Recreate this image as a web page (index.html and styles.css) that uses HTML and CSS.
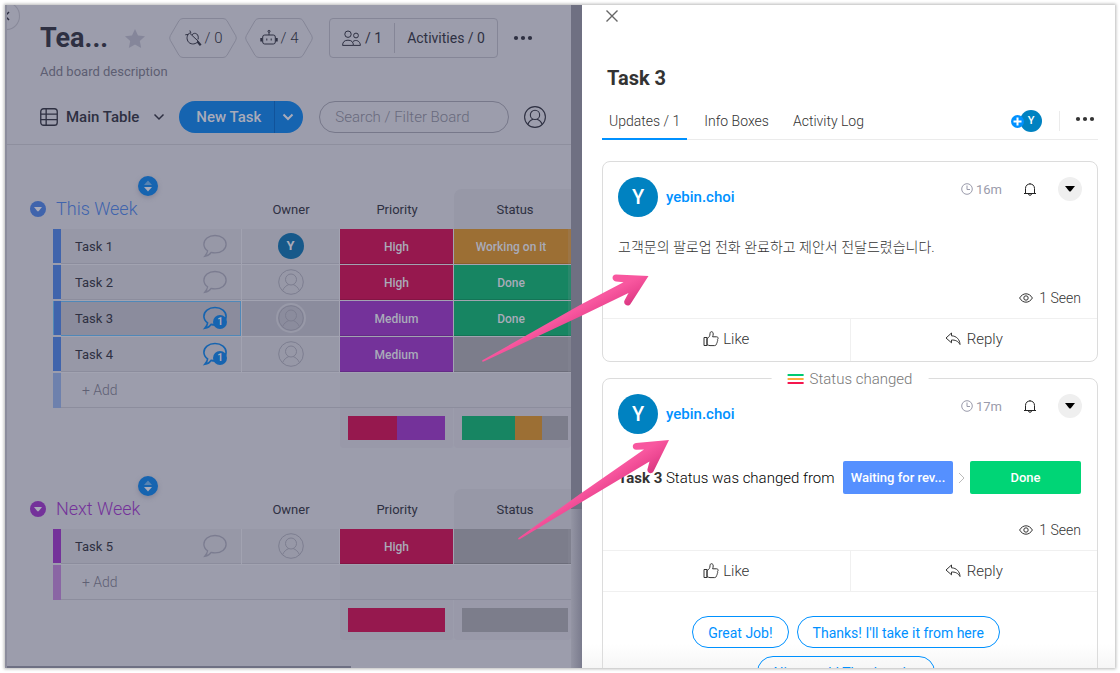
FILE: index.html
```html
<!DOCTYPE html>
<html lang="ko">
<head>
	<meta charset="utf-8">
	<meta name="viewport" content="width=device-width, initial-scale=1.0">
	<link rel="stylesheet" href="styles.css">
<title>Team board</title>
</head>
<body>
<svg class="defs" aria-hidden="true">
	<symbol id="i-bubble" viewBox="0 0 26 26"><path d="M13 2.500C6.500 2.500 1.900 6.300 1.900 11.200c0 2.700 1.400 5 3.700 6.600-.2 2.100-1.500 4-2.800 5.500 2.800-.4 4.900-1.400 6.300-3.900 1.200.3 2.600.5 3.900.5 6.500 0 11.100-3.800 11.100-8.700S19.500 2.500 13 2.500z"/></symbol>
	<symbol id="i-person" viewBox="0 0 26 26"><circle cx="13" cy="13" r="12.300"/><circle cx="13" cy="10.500" r="5.500"/><path d="M4.500 21.800c1.200-3.300 4-5.500 6.300-6.200M21.500 21.800c-1.200-3.300-4-5.500-6.300-6.200"/></symbol>
	<symbol id="i-chevron" viewBox="0 0 12 8"><path d="M1.500 1.500L6 6l4.500-4.500"/></symbol>
	<symbol id="i-caret" viewBox="0 0 10 6"><path d="M0 0h10L6 5q-1 1-2 0z"/></symbol>
	<symbol id="i-dots" viewBox="0 0 20 6"><circle cx="3" cy="3" r="2.100"/><circle cx="10" cy="3" r="2.100"/><circle cx="17" cy="3" r="2.100"/></symbol>
	<symbol id="i-sort" viewBox="0 0 10 12"><path d="M1 5l4-4.500L9 5z" opacity=".45"/><path d="M1 7l4 4.500L9 7z"/></symbol>
	<symbol id="i-clock" viewBox="0 0 12 12"><circle cx="6" cy="6" r="5.300"/><path d="M6 2.500V6.500h3"/></symbol>
	<symbol id="i-bell" viewBox="0 0 14 15"><path d="M1 11.500h12M2.500 11.500V6.500C2.500 3.500 4.500 2 7 2s4.500 1.500 4.500 4.500v5M5.500 11.800a1.500 1.500 0 0 0 3 0M7 2V1"/></symbol>
	<symbol id="i-eye" viewBox="0 0 14 10"><path d="M.6 5C2.200 2.300 4.500.8 7 .8S11.800 2.300 13.400 5C11.800 7.700 9.500 9.200 7 9.200S2.200 7.700.6 5z"/><circle cx="7" cy="5" r="2.200"/></symbol>
	<symbol id="i-like" viewBox="0 0 16 16"><path d="M1 6.500h3v8H1zM4 7.500c2.200-1 3-2.600 3-4.800 0-1.400.7-2 1.500-2 1.200 0 1.700 1 1.700 2.300 0 1-.3 2-.6 2.800h4c1 0 1.600.7 1.500 1.600 0 .6-.3 1-.7 1.300.5.800.3 1.700-.4 2.200.3.900 0 1.600-.7 2 0 1.100-.7 1.700-1.800 1.700H7c-1.200 0-2-.6-3-.9z"/></symbol>
	<symbol id="i-reply" viewBox="0 0 16 14"><path d="M6.500 1L1 6l5.500 4.800V8c3.500-.1 6.500.9 8.500 4.500C14.800 7.500 11.500 4 6.500 3.800z"/></symbol>
</svg>

<div class="app">
	<main class="board">
		<button class="back" type="button" aria-label="Back"><svg viewBox="0 0 6 10"><path d="M5 1L1 5l4 4"/></svg></button>

		<header class="board-head">
			<div class="title-row">
				<h1>Tea...</h1>
				<svg class="star" viewBox="0 0 20 19"><path d="M10 0l3 6.500 7 .8-5.200 4.700 1.400 7L10 15.500 3.800 19l1.400-7L0 7.300l7-.8z"/></svg>
				<button class="hex" type="button">
					<svg class="hex-shape" viewBox="0 0 68 40"><path d="M14 .5h40q2.500 0 4 2.200l8.700 15q1.300 2.300 0 4.600l-8.700 15q-1.500 2.200-4 2.200H14q-2.500 0-4-2.200l-8.700-15q-1.300-2.300 0-4.600l8.700-15q1.500-2.200 4-2.200z"/></svg>
					<svg class="icon" viewBox="0 0 18 18"><path d="M5.500 4l8.500 8c-1.500 3.300-6.500 4-9.300 1.300C2.300 10.500 2.500 6.500 5.500 4zM4 5.500L1.300 5.800M7 4.200L5.800 1.500M8 5.800C11 2.300 15.500 5.500 14 10.500"/><path d="M13.500 12.500l3.200 3.700" stroke-width="2.200"/></svg>
					<span>/ 0</span>
				</button>
				<button class="hex" type="button">
					<svg class="hex-shape" viewBox="0 0 68 40"><path d="M14 .5h40q2.500 0 4 2.200l8.700 15q1.300 2.300 0 4.600l-8.700 15q-1.500 2.200-4 2.200H14q-2.500 0-4-2.200l-8.700-15q-1.300-2.300 0-4.600l8.700-15q1.500-2.200 4-2.200z"/></svg>
					<svg class="icon" viewBox="0 0 18 18"><rect x="2.700" y="6" width="12.600" height="9" rx="2"/><path d="M9 6V3M6.800 9.500v2M11.200 9.500v2"/><path d="M1.300 9v3.500M16.700 9v3.500" stroke-width="2"/><circle cx="9" cy="2.300" r="1"/></svg>
					<span>/ 4</span>
				</button>
				<div class="meta">
					<button type="button">
						<svg class="people" viewBox="0 0 19 16"><circle cx="6" cy="4.200" r="3.200"/><circle cx="14" cy="5.500" r="2.400"/><path d="M.6 15.400c0-3.500 1.900-5.200 5.400-5.200s5.400 1.700 5.400 5.200zM11 11.500c3-2.300 7.200-.6 7.400 3.900h-7"/></svg>
						<span>/ 1</span>
					</button>
					<button type="button">Activities / 0</button>
				</div>
				<button class="dots" type="button" aria-label="Board menu"><svg><use href="#i-dots"/></svg></button>
			</div>
			<p class="description">Add board description</p>
			<div class="view-row">
				<button class="view" type="button">
					<svg class="grid-icon" viewBox="0 0 19 19"><rect x=".8" y=".8" width="17.400" height="17.400" rx="3"/><path d="M1 6.500h17M1 12.300h17M6.500 1v17"/></svg>
					Main Table
					<svg class="chev"><use href="#i-chevron"/></svg>
				</button>
				<div class="new-task">
					<button type="button">New Task</button>
					<button type="button" aria-label="More"><svg class="chev"><use href="#i-chevron"/></svg></button>
				</div>
				<input class="search" type="text" placeholder="Search / Filter Board" aria-label="Search / Filter Board">
				<button class="who" type="button" aria-label="Filter by person"><svg><use href="#i-person"/></svg></button>
			</div>
		</header>

		<div class="groups">
			<table class="group week">
				<colgroup><col class="c-gutter"><col class="c-bar"><col class="c-name"><col class="c-owner"><col class="c-label"><col class="c-label"><col></colgroup>
				<thead>
					<tr>
						<th><button class="collapse" type="button" aria-label="Collapse"><svg><use href="#i-caret"/></svg></button></th>
						<th class="group-name" colspan="2">This Week<button class="sort" type="button" aria-label="Sort"><svg><use href="#i-sort"/></svg></button></th>
						<th>Owner</th>
						<th>Priority</th>
						<th class="sorted" colspan="2">Status</th>
					</tr>
				</thead>
				<tbody>
					<tr>
						<td></td><td class="bar"></td>
						<td class="name"><div>Task 1<svg class="bubble"><use href="#i-bubble"/></svg></div></td>
						<td class="owner"><span class="avatar small">Y</span></td>
						<td class="label high">High</td>
						<td class="label working">Working on it</td>
						<td class="label working next"></td>
					</tr>
					<tr>
						<td></td><td class="bar"></td>
						<td class="name"><div>Task 2<svg class="bubble"><use href="#i-bubble"/></svg></div></td>
						<td class="owner"><svg class="nobody"><use href="#i-person"/></svg></td>
						<td class="label high">High</td>
						<td class="label done">Done</td>
						<td class="label done next"></td>
					</tr>
					<tr class="selected">
						<td></td><td class="bar"></td>
						<td class="name"><div>Task 3<span class="updates"><svg class="bubble"><use href="#i-bubble"/></svg><b>1</b></span></div></td>
						<td class="owner"><svg class="nobody"><use href="#i-person"/></svg></td>
						<td class="label medium">Medium</td>
						<td class="label done">Done</td>
						<td class="label done next"></td>
					</tr>
					<tr>
						<td></td><td class="bar"></td>
						<td class="name"><div>Task 4<span class="updates"><svg class="bubble"><use href="#i-bubble"/></svg><b>1</b></span></div></td>
						<td class="owner"><svg class="nobody"><use href="#i-person"/></svg></td>
						<td class="label medium">Medium</td>
						<td class="label empty"></td>
						<td class="label empty next"></td>
					</tr>
					<tr class="add">
						<td></td><td class="bar"></td>
						<td class="add-name" colspan="2">+ Add</td>
						<td class="pad"></td>
						<td class="pad" colspan="2"></td>
					</tr>
				</tbody>
				<tfoot>
					<tr>
						<td colspan="4"></td>
						<td class="sum"><div><i class="high" style="flex-grow:2"></i><i class="medium" style="flex-grow:2"></i></div></td>
						<td class="sum last" colspan="2"><div><i class="done" style="flex-grow:2"></i><i class="working" style="flex-grow:1"></i><i class="empty" style="flex-grow:1"></i></div></td>
					</tr>
				</tfoot>
			</table>

			<table class="group later">
				<colgroup><col class="c-gutter"><col class="c-bar"><col class="c-name"><col class="c-owner"><col class="c-label"><col class="c-label"><col></colgroup>
				<thead>
					<tr>
						<th><button class="collapse" type="button" aria-label="Collapse"><svg><use href="#i-caret"/></svg></button></th>
						<th class="group-name" colspan="2">Next Week<button class="sort" type="button" aria-label="Sort"><svg><use href="#i-sort"/></svg></button></th>
						<th>Owner</th>
						<th>Priority</th>
						<th class="sorted" colspan="2">Status</th>
					</tr>
				</thead>
				<tbody>
					<tr>
						<td></td><td class="bar"></td>
						<td class="name"><div>Task 5<svg class="bubble"><use href="#i-bubble"/></svg></div></td>
						<td class="owner"><svg class="nobody"><use href="#i-person"/></svg></td>
						<td class="label high">High</td>
						<td class="label empty"></td>
						<td class="label empty next"></td>
					</tr>
					<tr class="add">
						<td></td><td class="bar"></td>
						<td class="add-name" colspan="2">+ Add</td>
						<td class="pad"></td>
						<td class="pad" colspan="2"></td>
					</tr>
				</tbody>
				<tfoot>
					<tr>
						<td colspan="4"></td>
						<td class="sum"><div><i class="high" style="flex-grow:1"></i></div></td>
						<td class="sum last" colspan="2"><div><i class="empty" style="flex-grow:1"></i></div></td>
					</tr>
				</tfoot>
			</table>
		</div>
		<div class="hscroll"></div>
	</main>

	<div class="vscroll"><div></div></div>

	<aside class="panel">
		<button class="close" type="button" aria-label="Close"><svg viewBox="0 0 12 12"><path d="M.5.5l11 11M11.500.5l-11 11"/></svg></button>
		<h2>Task 3</h2>
		<nav class="tabs">
			<a class="tab active" href="#updates">Updates / 1</a>
			<a class="tab" href="#info">Info Boxes</a>
			<a class="tab" href="#log">Activity Log</a>
			<div class="tab-tools">
				<button class="subscribe" type="button" aria-label="Subscribers"><svg viewBox="0 0 13 13"><circle cx="6.500" cy="6.500" r="6.500"/><path d="M6.500 2.500v8M2.500 6.500h8"/></svg><span class="avatar tiny">Y</span></button>
				<button class="dots" type="button" aria-label="Item menu"><svg><use href="#i-dots"/></svg></button>
			</div>
		</nav>

		<article class="post">
			<header>
				<span class="avatar">Y</span>
				<a class="author" href="#yebin">yebin.choi</a>
				<div class="post-tools">
					<span class="time"><svg><use href="#i-clock"/></svg>16m</span>
					<button class="bell" type="button" aria-label="Remind"><svg><use href="#i-bell"/></svg></button>
					<button class="more" type="button" aria-label="More"><svg><use href="#i-caret"/></svg></button>
				</div>
			</header>
			<p class="message">고객문의 팔로업 전화 완료하고 제안서 전달드렸습니다.</p>
			<div class="seen"><svg><use href="#i-eye"/></svg>1 Seen</div>
			<div class="actions">
				<button type="button"><svg><use href="#i-like"/></svg>Like</button>
				<button type="button"><svg><use href="#i-reply"/></svg>Reply</button>
			</div>
		</article>

		<article class="post change">
			<div class="legend"><i></i>Status changed</div>
			<header>
				<span class="avatar">Y</span>
				<a class="author" href="#yebin">yebin.choi</a>
				<div class="post-tools">
					<span class="time"><svg><use href="#i-clock"/></svg>17m</span>
					<button class="bell" type="button" aria-label="Remind"><svg><use href="#i-bell"/></svg></button>
					<button class="more" type="button" aria-label="More"><svg><use href="#i-caret"/></svg></button>
				</div>
			</header>
			<div class="diff">
				<p><strong>Task 3</strong> Status was changed from</p>
				<span class="chip from">Waiting for rev...</span>
				<svg class="to-arrow" viewBox="0 0 7 12"><path d="M1 1l5 5-5 5"/></svg>
				<span class="chip to">Done</span>
			</div>
			<div class="seen"><svg><use href="#i-eye"/></svg>1 Seen</div>
			<div class="actions">
				<button type="button"><svg><use href="#i-like"/></svg>Like</button>
				<button type="button"><svg><use href="#i-reply"/></svg>Reply</button>
			</div>
			<div class="replies">
				<button type="button">Great Job!</button>
				<button type="button">Thanks! I'll take it from here</button>
				<button type="button">Nice work! Thanks a lot</button>
			</div>
		</article>
	</aside>
</div>

<!-- callout arrows, drawn over both the board and the panel -->
<svg class="callouts" viewBox="0 0 200 280" aria-hidden="true">
	<defs>
		<linearGradient id="pink1" gradientUnits="userSpaceOnUse" x1="115" y1="30" x2="124" y2="47"><stop offset="0" stop-color="#f8579f"/><stop offset=".5" stop-color="#ee4993"/><stop offset="1" stop-color="#dd3a84"/></linearGradient>
		<linearGradient id="pink2" gradientUnits="userSpaceOnUse" x1="135" y1="200" x2="146" y2="217"><stop offset="0" stop-color="#f8579f"/><stop offset=".5" stop-color="#ee4993"/><stop offset="1" stop-color="#dd3a84"/></linearGradient>
	</defs>
	<path fill="url(#pink1)" d="M168.500 6L136 4.500c-4.500 0-4.700 6.500 0 7l7.500.7L100 35 2.500 90.200c-1 1 0 1.800 1.200 1.300L100 46.500 148.500 23l-4 7.500c-1.800 4 3.800 7 6 3.500z"/>
	<path fill="url(#pink2)" d="M189 170l-33 3c-4.500.5-4.200 7 .5 6.800l7.500-.3L100 224l-61.500 44c-1 1 0 1.800 1.200 1.300L100 233l69.500-41.500-2 7.500c-1 4.300 4.500 5.800 6.200 2z"/>
</svg>
</body>
</html>
```
FILE: styles.css
```css
* {
	box-sizing: border-box;
}

body {
	margin: 0;
	background: #fff;
	color: #2e3042;
	font-family: Roboto, "Noto Sans CJK KR", sans-serif;
	font-size: 14px;
	overflow: hidden;
}

button, input {
	font: inherit;
	color: inherit;
	background: none;
	border: none;
	padding: 0;
	margin: 0;
}

button {
	cursor: pointer;
}

svg {
	display: block;
	flex: none;
	fill: none;
	stroke: currentColor;
}

h1, h2, p {
	margin: 0;
}

.defs {
	position: absolute;
	width: 0;
	height: 0;
}

.app {
	display: grid;
	grid-template-columns: minmax(0, 1fr) 11px 533px;
	height: calc(100vh - 10px);
	margin: 5px;
	overflow: hidden;
	box-shadow: 0 0 3px 1px #b8b8b8;
}

/* board, dimmed behind the open panel */
.board {
	position: relative;
	overflow: hidden;
	background: #9c9dac;
	border-left: 2px solid #8b8c9c;
}

.back {
	position: absolute;
	left: -14px;
	top: -3px;
	width: 27px;
	height: 28px;
	padding-left: 10px;
	border: 1px solid #888999;
	border-radius: 50%;
}

.back svg {
	width: 6px;
	height: 10px;
	stroke-width: 1.5;
}

.board-head {
	padding: 13px 0 11px 33px;
	border-bottom: 1px solid #8e8f9e;
}

.title-row {
	display: flex;
	align-items: center;
	height: 40px;
}

h1 {
	width: 85px;
	font-size: 27px;
	font-weight: 700;
}

.star {
	width: 20px;
	height: 19px;
	margin-right: 24px;
	fill: #85869a;
	stroke: none;
}

.hex {
	position: relative;
	display: flex;
	align-items: center;
	justify-content: center;
	gap: 3px;
	width: 68px;
	height: 40px;
	margin-right: 8px;
	font-size: 15px;
	font-weight: 300;
}

.hex-shape {
	position: absolute;
	inset: 0;
	color: #858697;
}

.icon {
	width: 18px;
	height: 18px;
}

.meta {
	display: flex;
	align-items: center;
	height: 40px;
	margin: 0 15px 0 8px;
	border: 1px solid #858697;
	border-radius: 4px;
	font-weight: 400;
}

.meta button {
	display: flex;
	align-items: center;
	gap: 4px;
	height: 30px;
	padding: 0 12px;
}

.meta button + button {
	border-left: 1px solid #858697;
}

.people {
	width: 19px;
	height: 16px;
}

.dots svg {
	width: 20px;
	height: 6px;
	fill: currentColor;
	stroke: none;
}

.description {
	margin: 4px 0 19px;
	font-size: 13px;
	line-height: 20px;
	color: #5d5e72;
}

.view-row {
	display: flex;
	align-items: center;
	height: 32px;
}

.view {
	display: flex;
	align-items: center;
	gap: 8px;
	font-size: 15px;
	font-weight: 500;
}

.grid-icon {
	width: 18px;
	height: 18px;
	stroke-width: 1.4;
}

.chev {
	width: 12px;
	height: 8px;
	stroke-width: 1.5;
}

.view .chev {
	margin-left: 6px;
}

.new-task {
	display: flex;
	height: 32px;
	margin: 0 16px 0 14px;
	border-radius: 16px;
	background: #1664b0;
	color: #a9abb9;
	font-size: 15px;
	font-weight: 500;
	overflow: hidden;
}

.new-task button {
	padding: 0 13px 0 17px;
}

.new-task button + button {
	padding: 0 9px 0 7px;
	border-left: 1px solid #11539a;
}

.new-task .chev {
	stroke-width: 2;
}

.search {
	width: 190px;
	height: 32px;
	padding: 0 15px;
	border: 1px solid #77788a;
	border-radius: 16px;
	font-size: 15px;
	font-weight: 300;
}

.search::placeholder {
	color: #686a7d;
	opacity: 1;
}

.who {
	margin-left: 15px;
}

.who svg {
	width: 22px;
	height: 22px;
	stroke-width: 1.3;
}

.groups {
	padding: 44px 0 0 22px;
}

.group {
	width: 100%;
	margin-bottom: 41px;
	table-layout: fixed;
	border-collapse: separate;
	border-spacing: 0;
	font-size: 13px;
}

.week {
	--accent: #4064ac;
	--accent-soft: #6e81ad;
}

.later {
	--accent: #74329a;
	--accent-soft: #8a66a4;
}

.c-gutter {
	width: 24px;
}

.c-bar {
	width: 8px;
}

.c-name {
	width: 181px;
}

.c-owner {
	width: 98px;
}

.c-label {
	width: 114px;
}

.group th, .group td {
	padding: 0;
	text-align: center;
}

.group th {
	height: 40px;
	font-weight: 400;
}

.group .group-name {
	position: relative;
	padding: 0 0 2px 3px;
	text-align: left;
	font-size: 18px;
	font-weight: 300;
	color: var(--accent);
}

.group .sorted {
	padding-left: 5px;
	background: #9798a7;
	border-top-left-radius: 8px;
}

.collapse, .sort {
	display: flex;
	align-items: center;
	justify-content: center;
	border-radius: 50%;
	color: #a9abb9;
}

.collapse {
	width: 16px;
	height: 16px;
	margin-left: 1px;
	background: var(--accent);
}

.collapse svg {
	width: 8px;
	height: 5px;
	fill: currentColor;
	stroke: none;
}

.sort {
	position: absolute;
	top: -13px;
	right: 50%;
	width: 20px;
	height: 20px;
	margin-right: -10px;
	background: #1664b0;
	box-shadow: 0 2px 5px #85869a;
}

.sort svg {
	width: 10px;
	height: 12px;
	fill: currentColor;
	stroke: none;
}

.group tbody td {
	height: 36px;
	border-bottom: 1px solid #a2a3b1;
}

.group tbody td:first-child {
	border: none;
}

.group tbody .bar {
	background: var(--accent);
	border-bottom: 2px solid #9c9dac;
}

.name, .owner {
	background: #9798a7;
	box-shadow: inset 0 -1px #8c8d9d;
}

.group .name, .group .owner {
	padding-bottom: 1px;
}

.name, .owner, .label {
	border-right: 1px solid #a2a3b1;
}

.name div {
	display: flex;
	align-items: center;
	justify-content: space-between;
	padding: 0 13px 0 14px;
}

.selected .name, .selected .owner {
	background: #8b8c9d;
}

.selected .name {
	box-shadow: inset 0 1px #5088b8, inset 0 -1px #5088b8, inset -1px 0 #5088b8;
}

.selected .bar {
	box-shadow: inset 1px 0 #5088b8;
}

.bubble {
	width: 26px;
	height: 26px;
	stroke-width: 1.3;
	color: #7b7c90;
}

.updates {
	position: relative;
}

.updates .bubble {
	color: #1664b0;
	stroke-width: 1.6;
}

.updates b {
	position: absolute;
	right: 1px;
	bottom: 2px;
	width: 14px;
	height: 14px;
	border-radius: 50%;
	background: #1664b0;
	color: #a9abb9;
	font-size: 10px;
	line-height: 14px;
	text-align: center;
}

.avatar {
	display: block;
	flex: none;
	width: 40px;
	height: 40px;
	border-radius: 50%;
	background: #0082c1;
	color: #fff;
	font-size: 20px;
	font-weight: 500;
	line-height: 40px;
	text-align: center;
}

.avatar.small {
	width: 26px;
	height: 26px;
	margin: 0 auto;
	background: #17598a;
	color: #a9abb9;
	font-size: 13px;
	font-weight: 700;
	line-height: 26px;
}

.avatar.tiny {
	width: 22px;
	height: 22px;
	font-size: 11px;
	line-height: 22px;
}

.nobody {
	width: 26px;
	height: 26px;
	margin: 0 auto;
	color: #7d7e90;
}

.selected .nobody {
	border-radius: 50%;
	box-shadow: 0 0 0 2px #9899a8;
}

.group .label {
	color: #a9abb9;
	font-size: 12px;
	font-weight: 500;
	box-shadow: inset 0 -1px rgba(0, 0, 0, .12);
}

.high {
	background: #96184e;
}

.medium {
	background: #74329a;
}

.working {
	background: #9c6f34;
}

.done {
	background: #178562;
}

.empty {
	background: #7c7d8b;
}

.label:nth-child(6) {
	border-right: none;
}

.group .next {
	border-right: none;
	opacity: .85;
}

.group .add td {
	height: 35px;
	border-bottom: 1px solid #8c8d9d;
}

.group .add .bar {
	background: var(--accent-soft);
	border-bottom: none;
}

.group .add .add-name {
	padding-left: 21px;
	text-align: left;
	color: #5f6074;
	font-size: 14px;
	font-weight: 300;
}

.pad {
	background: #999aa9;
}

.group .sum {
	height: 40px;
	padding: 0 8px;
	background: #9999a9;
	border-right: 1px solid #9c9dac;
	border-radius: 0 0 4px 4px;
}

.group .last {
	padding-right: 3px;
	border-right: none;
}

.sum div {
	display: flex;
	height: 24px;
}

.sum i {
	flex-basis: 0;
}

.hscroll {
	position: absolute;
	left: 0;
	bottom: 0;
	width: 61%;
	height: 2px;
	background: #6e7083;
}

.vscroll {
	background: linear-gradient(to right, #9495a4, #7a7b8d);
}

.vscroll div {
	height: 76%;
	background: #6f7082;
}

/* item panel */
.panel {
	padding: 0 17px 0 20px;
	overflow: hidden;
	background: linear-gradient(to top, #f6f6f6, #fff 24px);
	color: #333;
}

.close {
	display: block;
	margin: 5px 0 0 4px;
	color: #666;
}

.close svg {
	width: 12px;
	height: 12px;
	stroke-width: 1.4;
}

h2 {
	margin: 44px 0 0 5px;
	font-size: 20px;
	font-weight: 700;
	line-height: 24px;
}

.tabs {
	display: flex;
	gap: 10px;
	height: 50px;
	margin-bottom: 21px;
	border-bottom: 1px solid #ebebeb;
	font-weight: 300;
}

.tab {
	height: 50px;
	padding: 21px 7px 0;
	line-height: 20px;
	color: inherit;
	text-decoration: none;
}

.tab.active {
	border-bottom: 2px solid #0091ff;
}

.tab-tools {
	display: flex;
	align-items: center;
	margin: 13px 3px 0 auto;
}

.tab-tools .dots {
	padding: 5px 0 9px 15px;
	border-left: 1px solid #ebebeb;
}

.subscribe {
	display: flex;
	align-items: center;
	margin-right: 17px;
}

.subscribe svg {
	z-index: 1;
	width: 13px;
	height: 13px;
	margin-right: -4px;
	fill: #0091ff;
	stroke: none;
}

.subscribe svg path {
	stroke: #fff;
	stroke-width: 2;
}

.post {
	position: relative;
	margin-bottom: 16px;
	border: 1px solid #dcdcdc;
	border-radius: 8px;
}

.post header {
	display: flex;
	gap: 8px;
	padding: 15px 15px 0;
}

.author {
	font-size: 15px;
	font-weight: 500;
	line-height: 40px;
	color: #0091ff;
	text-decoration: none;
}

.post-tools {
	display: flex;
	align-items: center;
	height: 24px;
	margin-left: auto;
}

.time {
	display: flex;
	align-items: center;
	gap: 3px;
	color: #9a9bab;
	font-size: 13px;
}

.time svg {
	width: 12px;
	height: 12px;
}

.bell {
	margin: 0 21px;
	color: #222;
}

.bell svg {
	width: 14px;
	height: 15px;
}

.more {
	display: flex;
	align-items: center;
	justify-content: center;
	width: 24px;
	height: 24px;
	border-radius: 50%;
	background: #efefef;
	color: #000;
}

.more svg {
	width: 10px;
	height: 6px;
	fill: currentColor;
	stroke: none;
}

.message {
	padding: 20px 15px;
	line-height: 20px;
	font-weight: 300;
}

.seen {
	display: flex;
	align-items: center;
	justify-content: flex-end;
	gap: 6px;
	height: 41px;
	padding: 0 16px;
	font-weight: 300;
}

.seen svg {
	width: 14px;
	height: 10px;
}

.actions {
	display: flex;
	height: 43px;
	border-top: 1px solid #f0f0f0;
}

.actions button {
	flex: 1;
	display: flex;
	align-items: center;
	justify-content: center;
	gap: 4px;
	padding-bottom: 2px;
	font-size: 15px;
	font-weight: 300;
}

.actions button + button {
	gap: 6px;
	border-left: 1px solid #f0f0f0;
}

.actions svg {
	width: 16px;
	height: 16px;
}

.change .actions {
	height: 42px;
	border-bottom: 1px solid #f0f0f0;
}

.change .actions button {
	padding-bottom: 0;
}

.legend {
	position: absolute;
	top: -10px;
	left: 50%;
	transform: translateX(-50%);
	display: flex;
	align-items: center;
	gap: 6px;
	padding: 0 16px;
	background: #fff;
	color: #777;
	font-size: 15px;
	font-weight: 300;
	line-height: 20px;
	white-space: nowrap;
}

.legend i {
	width: 16px;
	height: 10px;
	border-top: 2px solid #00ca72;
	border-bottom: 2px solid #f5164e;
	background: linear-gradient(#fff 2px, #fdab3d 2px, #fdab3d 4px, #fff 4px);
}

.diff {
	display: flex;
	align-items: center;
	padding: 27px 16px 15px 15px;
	color: #000;
	font-size: 15px;
	font-weight: 300;
}

.diff strong {
	color: #333;
	font-weight: 700;
}

.chip {
	height: 33px;
	border-radius: 2px;
	color: #fff;
	font-size: 13px;
	font-weight: 500;
	line-height: 33px;
	text-align: center;
}

.from {
	width: 110px;
	margin-left: auto;
	background: #5590ff;
}

.to {
	width: 111px;
	background: #00d576;
}

.to-arrow {
	width: 7px;
	height: 12px;
	margin: 0 5px;
	color: #bbb;
}

.replies {
	display: flex;
	flex-wrap: wrap;
	justify-content: center;
	gap: 8px;
	padding: 24px 66px 24px 58px;
}

.replies button {
	height: 32px;
	padding: 2px 15px 0;
	border: 1px solid #0091ff;
	border-radius: 16px;
	color: #0091ff;
	font-weight: 400;
}

.callouts {
	position: absolute;
	left: 480px;
	top: 270px;
	width: 200px;
	height: 280px;
	stroke: none;
	pointer-events: none;
}
```
